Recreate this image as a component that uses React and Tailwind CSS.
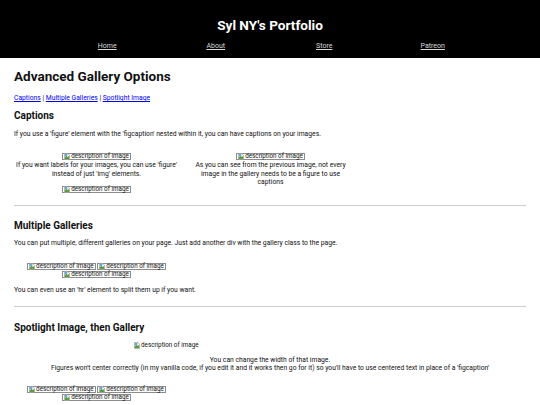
import React from 'react';

const BrokenIcon = () => (
  <svg width="6" height="7" viewBox="0 0 14 16" className="inline-block shrink-0">
    <path d="M1 1h8l4 4v10H1z" fill="#fff" stroke="#888" strokeWidth="1.5" />
    <path d="M2 9l4-3 3 3 2-2 1 1v6H2z" fill="#5a9e3c" />
    <path d="M2 2h6v4l-3 2-3-1z" fill="#6aa6dc" />
  </svg>
);

const Img = ({ border = true }) => (
  <span
    className={
      'inline-flex items-center gap-[1px] h-[7px] leading-[7px] align-top text-[6.3px] ' +
      (border ? 'border border-[#8c8c8c] px-[1px]' : '')
    }
  >
    <BrokenIcon />
    <span>description of image</span>
  </span>
);

const Gallery = () => (
  <div className="w-[165px] text-center leading-[7.5px]">
    <Img /> <Img /> <Img />
  </div>
);

export default function App() {
  const navItems = ['Home', 'About', 'Store', 'Patreon'];

  return (
    <div className="min-h-[405px] bg-white text-[#111]" style={{ fontFamily: 'Roboto, "Liberation Sans", sans-serif' }}>
      <header className="h-[58px] bg-black text-white flex flex-col items-center">
        <h1 className="pt-[17px] text-[13.6px] leading-[16px] font-bold">Syl NY's Portfolio</h1>
        <nav className="mt-[9px] w-full px-[53px] grid grid-cols-4 text-center text-[7px] leading-[8px]">
          {navItems.map((item) => (
            <a key={item} href="#" className="underline text-[#d9d9d9]">{item}</a>
          ))}
        </nav>
      </header>

      <main className="px-[14px] text-[6.75px]">
        <h1 className="mt-[9px] text-[13.5px] leading-[18px] font-bold">Advanced Gallery Options</h1>
        <div className="mt-[9px] leading-[9px]">
          <a href="#" className="underline text-[#0000ee]">Captions</a> |{' '}
          <a href="#" className="underline text-[#0000ee]">Multiple Galleries</a> |{' '}
          <a href="#" className="underline text-[#0000ee]">Spotlight Image</a>
        </div>

        {/* captions */}
        <h2 className="mt-[6px] text-[10px] leading-[13px] font-bold">Captions</h2>
        <p className="mt-[8px] leading-[9px]">
          If you use a 'figure' element with the 'figcaption' nested within it, you can have captions on your images.
        </p>
        <div className="mt-[14px] flex flex-wrap gap-x-[9px] leading-[8.3px]">
          <div className="w-[165px] text-center">
            <Img />
            <div>If you want labels for your images, you can use 'figure' instead of just 'img' elements.</div>
          </div>
          <div className="w-[165px] text-center">
            <Img />
            <div className="px-[5px]">As you can see from the previous image, not every image in the gallery needs to be a figure to use captions</div>
          </div>
          <div className="w-[165px] text-center">
            <Img />
          </div>
        </div>
        <hr className="mt-[11px] border-t border-[#cccccc]" />

        {/* multiple galleries */}
        <h2 className="mt-[13px] text-[10px] leading-[13px] font-bold">Multiple Galleries</h2>
        <p className="mt-[7px] leading-[9px]">
          You can put multiple, different galleries on your page. Just add another div with the gallery class to the page.
        </p>
        <div className="mt-[15px]">
          <Gallery />
        </div>
        <p className="mt-[8px] leading-[9px]">You can even use an 'hr' element to split them up if you want.</p>
        <hr className="mt-[11px] border-t border-[#cccccc]" />

        {/* spotlight */}
        <h2 className="mt-[14px] text-[10px] leading-[13px] font-bold">Spotlight Image, then Gallery</h2>
        <div className="mt-[8px] w-[272px] mx-auto leading-[8px]">
          <Img border={false} />
        </div>
        <div className="mt-[6px] text-center leading-[8px]">
          <div>You can change the width of that image.</div>
          <div>Figures won't center correctly (in my vanilla code, if you edit it and it works then go for it) so you'll have to use centered text in place of a 'figcaption'</div>
        </div>
        <div className="mt-[14px]">
          <Gallery />
        </div>
        <a href="#" className="block mt-[3px] underline text-[#0000ee] leading-[9px]">Back to Top</a>
      </main>
    </div>
  );
}
